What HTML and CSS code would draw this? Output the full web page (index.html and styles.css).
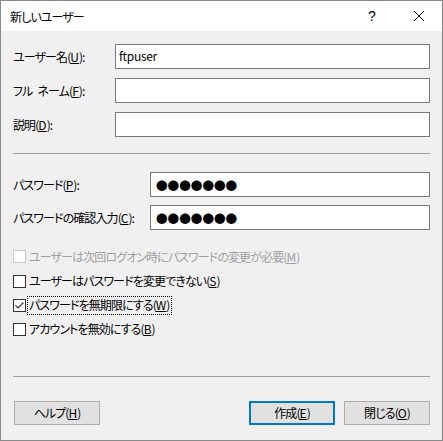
FILE: index.html
```html
<!DOCTYPE html>
<html lang="ja">
<head>
<meta charset="utf-8">
<title>新しいユーザー</title>
<link rel="stylesheet" href="styles.css">
</head>
<body>
<div class="window">
  <div class="titlebar">
    <span class="title">新しいユーザー</span>
    <span class="tbtn help">?</span>
    <span class="tbtn close">
      <svg width="12" height="12" viewBox="0 0 12 12"><path d="M1 1 L11 11 M11 1 L1 11" stroke="#000" stroke-width="1" fill="none"/></svg>
    </span>
  </div>
  <div class="content">
    <div class="form form-top">
      <label class="lbl">ユーザー名(<u>U</u>):</label>
      <div class="field"><span class="value">ftpuser</span></div>
      <label class="lbl">フル&ensp;ネーム(<u>F</u>):</label>
      <div class="field"></div>
      <label class="lbl">説明(<u>D</u>):</label>
      <div class="field"></div>
    </div>
    <div class="sep sep-top"></div>
    <div class="form form-pw">
      <label class="lbl">パスワード(<u>P</u>):</label>
      <div class="field"><span class="dots">●●●●●●●</span></div>
      <label class="lbl">パスワードの確認入力(<u>C</u>):</label>
      <div class="field"><span class="dots">●●●●●●●</span></div>
    </div>
    <div class="checks">
      <div class="chk disabled"><span class="box"></span><span class="txt">ユーザーは次回ログオン時にパスワードの変更が必要(<u>M</u>)</span></div>
      <div class="chk"><span class="box"></span><span class="txt">ユーザーはパスワードを変更できない(<u>S</u>)</span></div>
      <div class="chk"><span class="box"><svg width="11" height="11" viewBox="0 0 11 11"><path d="M1.5 5.5 L4 8 L9.5 2.5" stroke="#333" stroke-width="1.1" fill="none"/></svg></span><span class="txt focus">パスワードを無期限にする(<u>W</u>)</span></div>
      <div class="chk"><span class="box"></span><span class="txt">アカウントを無効にする(<u>B</u>)</span></div>
    </div>
    <div class="spacer"></div>
    <div class="sep sep-bottom"></div>
    <div class="buttons">
      <button class="btn">ヘルプ(<u>H</u>)</button>
      <span class="grow"></span>
      <button class="btn default">作成(<u>E</u>)</button>
      <button class="btn">閉じる(<u>O</u>)</button>
    </div>
  </div>
</div>
</body>
</html>
```
FILE: styles.css
```css
* { box-sizing: border-box; }
html, body { margin: 0; padding: 0; }
body {
  width: 443px;
  height: 441px;
  font-family: "Noto Sans CJK JP", "Noto Sans", sans-serif;
  font-size: 12px;
  letter-spacing: -0.9px;
  font-feature-settings: "palt";
  color: #000;
  background: #f0f0f0;
}
.window {
  width: 443px;
  height: 441px;
  border: 1px solid #8a8a8a;
  background: #f0f0f0;
  display: flex;
  flex-direction: column;
}
.titlebar {
  height: 30px;
  background: #fff;
  display: flex;
  align-items: center;
  flex: none;
}
.title {
  padding-left: 9px;
  flex: 1;
}
.tbtn {
  width: 46px;
  height: 30px;
  display: flex;
  align-items: center;
  justify-content: center;
}
.help { font-size: 14px; letter-spacing: 0; font-family: "Liberation Sans", sans-serif; padding-right: 2px; }
.content {
  flex: 1;
  display: flex;
  flex-direction: column;
  padding: 13px 12px 15px 12px;
}
.form {
  display: grid;
  row-gap: 9px;
  align-items: center;
}
.form-top { grid-template-columns: 102px 1fr; }
.form-pw { grid-template-columns: 137px 1fr; row-gap: 8px; }
.lbl { white-space: nowrap; line-height: 16px; }
.lbl u, .txt u, .btn u { letter-spacing: 0; }
.field {
  height: 25px;
  background: #fff;
  border: 1px solid #7a7a7a;
  display: flex;
  align-items: center;
  padding-left: 3px;
}
.value { line-height: 16px; padding-bottom: 1px; font-size: 12px; letter-spacing: -0.3px; }
.dots {
  font-size: 11.6px;
  letter-spacing: 0;
  font-feature-settings: normal;
  line-height: 14px;
  padding-left: 2px;
}
.sep {
  height: 1px;
  background: #a0a0a0;
}
.sep-top { margin: 16px 0 18px 0; }
.checks {
  margin-top: 14px;
  display: grid;
  grid-template-rows: 25px 24px 24px 24px;
}
.chk {
  display: flex;
  align-items: center;
}
.box {
  width: 13px;
  height: 13px;
  border: 1px solid #333;
  background: #fff;
  display: flex;
  align-items: center;
  justify-content: center;
  flex: none;
}
.txt {
  margin-left: 3px;
  line-height: 16px;
  white-space: nowrap;
}
.focus {
  outline: 1px dotted #000;
  outline-offset: 0;
  padding: 0 1px 1px 1px;
  margin-left: 2px;
}
.disabled .box { border-color: #cccccc; }
.disabled .txt { color: #a0a0a0; }
.spacer { flex: 1; }
.sep-bottom { margin-bottom: 24px; }
.buttons {
  display: flex;
  align-items: center;
  gap: 9px;
  padding-left: 1px;
}
.grow { flex: 1; }
.btn {
  width: 86px;
  height: 24px;
  background: #e1e1e1;
  border: 1px solid #adadad;
  font-family: inherit;
  font-feature-settings: "palt";
  font-size: 12px;
  letter-spacing: -0.9px;
  color: #000;
  padding: 0;
  margin: 0;
  line-height: 16px;
}
.btn.default { border: 2px solid #0078d7; }
```
